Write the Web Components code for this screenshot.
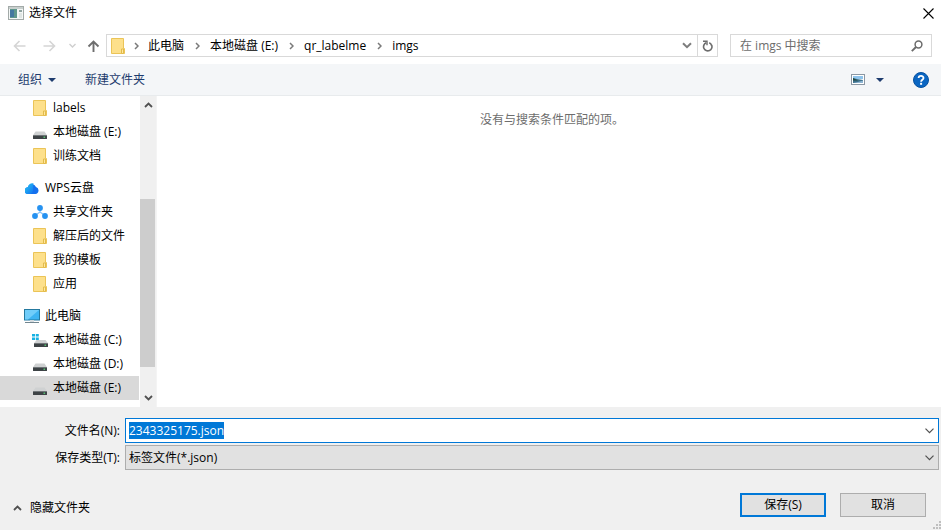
<!DOCTYPE html>
<html lang="zh-CN">
<head>
<meta charset="UTF-8">
<meta name="viewport" content="width=device-width, initial-scale=1">
<title>选择文件</title>
<style>
    body {
        margin: 0;
        font: 12px/16px "Open Sans", "Noto Sans CJK SC", sans-serif;
        color: #000;
        background: #fff;
    }
</style>
</head>
<body>
<file-dialog>
    <title-bar slot="title">选择文件</title-bar>
    <nav-bar slot="nav" placeholder="在 imgs 中搜索">
        <path-crumb>此电脑</path-crumb>
        <path-crumb>本地磁盘 (E:)</path-crumb>
        <path-crumb>qr_labelme</path-crumb>
        <path-crumb>imgs</path-crumb>
    </nav-bar>
    <tool-bar slot="tools"></tool-bar>
    <folder-tree slot="tree">
        <tree-item icon="folder" level="2">labels</tree-item>
        <tree-item icon="drive" level="2">本地磁盘 (E:)</tree-item>
        <tree-item icon="folder" level="2">训练文档</tree-item>
        <tree-item icon="cloud">WPS云盘</tree-item>
        <tree-item icon="share" level="2">共享文件夹</tree-item>
        <tree-item icon="folder" level="2">解压后的文件</tree-item>
        <tree-item icon="folder" level="2">我的模板</tree-item>
        <tree-item icon="folder" level="2">应用</tree-item>
        <tree-item icon="computer">此电脑</tree-item>
        <tree-item icon="system" level="2">本地磁盘 (C:)</tree-item>
        <tree-item icon="drive" level="2">本地磁盘 (D:)</tree-item>
        <tree-item icon="drive" level="2" selected>本地磁盘 (E:)</tree-item>
    </folder-tree>
    <span slot="files">没有与搜索条件匹配的项。</span>
    <save-panel slot="footer" filename="2343325175.json" filetype="标签文件(*.json)"></save-panel>
</file-dialog>

<script>
// [width, height, content]
const icons = {
    app: [16, 14, `
        <rect x=".5" y=".5" width="15" height="13" fill="#f4f7f6" stroke="#a3aaa8"/>
        <rect x="1" y="1" width="14" height="2" fill="#c9d0ce"/>
        <rect x="2" y="3" width="7" height="9" fill="#5f978c"/>
        <rect x="2" y="4" width="4" height="7" fill="#4478a0"/>
        <rect x="11" y="4" width="3" height="2" fill="#8fa3a0"/>
        <rect x="11" y="7" width="3" height="5" fill="#dfe5e3"/>`],
    close: [11, 11, `<path d="M.5.5l10 10M10.5.5l-10 10" fill="none" stroke="#000" stroke-width="1.1"/>`],
    back: [13, 12, `<path d="M12.5 6H1.5M6.5 1L1.5 6l5 5" fill="none" stroke="#d5d5d5" stroke-width="1.6"/>`],
    forward: [13, 12, `<path d="M.5 6h11M6.5 1l5 5-5 5" fill="none" stroke="#d5d5d5" stroke-width="1.6"/>`],
    recent: [7, 5, `<path d="M.5 1l3 3 3-3" fill="none" stroke="#cfcfcf" stroke-width="1.4"/>`],
    up: [13, 12, `<path d="M6.5 12V1.5M1.5 6.5l5-5 5 5" fill="none" stroke="#6e6e6e" stroke-width="1.9"/>`],
    crumb: [5, 8, `<path d="M1 1l3 3-3 3" fill="none" stroke="#7a7a7a" stroke-width="1.5"/>`],
    drop: [10, 7, `<path d="M1 1.2l4 4 4-4" fill="none" stroke="#7d7d7d" stroke-width="2"/>`],
    refresh: [11, 12, `
        <path d="M4.2 2.8A4.2 4.2 0 1 0 9.6 5" fill="none" stroke="#6c6c6c" stroke-width="1.6"/>
        <path d="M9.6 5.4A4.2 4.2 0 0 0 7.2 2.8" fill="none" stroke="#6c6c6c" stroke-width="1.6"/>
        <path d="M1 1.3h4v4" fill="none" stroke="#6c6c6c" stroke-width="1.4"/>`],
    search: [12, 12, `
        <circle cx="7.5" cy="4.5" r="3.4" fill="none" stroke="#6c6c6c" stroke-width="1.5"/>
        <path d="M5 7L.8 11.2" fill="none" stroke="#6c6c6c" stroke-width="1.9"/>`],
    triangle: [8, 4, `<path d="M0 0h8L4 4z" fill="#1e3c6e"/>`],
    view: [14, 11, `
        <rect x=".5" y=".5" width="13" height="10" fill="#fff" stroke="#8b98a4"/>
        <rect x="2" y="2" width="10" height="3" fill="#8ec4ec"/>
        <path d="M2 4l4 1 6 1v3H2z" fill="#3d718b"/>
        <path d="M2 4l5 2.5H2z" fill="#24493e"/>
        <path d="M6 8.2l6-1.7V9H2z" fill="#8eb5d3"/>`],
    help: [16, 16, `
        <circle cx="8" cy="8" r="7.5" fill="#0b66c2" stroke="#07519f"/>
        <path d="M5.6 6.1C5.6 3.2 10.5 3.2 10.5 6c0 1.8-2.4 1.8-2.4 3.8" fill="none" stroke="#fff" stroke-width="1.8"/>
        <rect x="7.1" y="10.8" width="2" height="2" fill="#fff"/>`],
    folder: [14, 16, `
        <path d="M.5.5h12v10h1v5H.5z" fill="#ffe391" stroke="#ebc457"/>
        <path d="M1 1h11v9.5l-1.5 1V15H1z" fill="#fde08b"/>
        <path d="M10.5 15.5v-4.5h2v4.5z" fill="#ffe99f" stroke="#e3bb4c"/>`],
    drive: [14, 9, `
        <path d="M2.5.5h9L14 4.2H0z" fill="#cfd1d2"/>
        <rect y="4" width="14" height="4" rx=".6" fill="#3d4245"/>
        <rect y="4" width="14" height=".8" fill="#7c8184"/>
        <rect x="10.5" y="5.6" width="1.6" height="1.2" fill="#5ddb7d"/>`],
    system: [16, 14, `
        <path d="M0 0h3v2.6H0zM3.8 0h3v2.6h-3zM0 3.4h3V6H0zM3.8 3.4h3V6h-3z" fill="#16b1e3"/>
        <path d="M4.5 6h9L16 9.2H2z" fill="#cfd1d2"/>
        <rect x="2" y="9" width="14" height="4" rx=".6" fill="#3d4245"/>
        <rect x="2" y="9" width="14" height=".8" fill="#7c8184"/>
        <rect x="12.5" y="10.6" width="1.6" height="1.2" fill="#5ddb7d"/>`],
    cloud: [14, 11, `
        <defs><linearGradient id="g" x1="0" x2="1" y1="0" y2="1">
            <stop offset="0" stop-color="#26c8f2"/><stop offset="1" stop-color="#126ff0"/>
        </linearGradient></defs>
        <path d="M3.4 11A3.3 3.3 0 0 1 2.8 4.3 4.4 4.4 0 0 1 11 4a3.6 3.6 0 0 1-.6 7z" fill="#1470ee"/>
        <path d="M3.4 11A3.3 3.3 0 0 1 2.8 4.3 4.4 4.4 0 0 1 8.6.6C7.5 4 9.5 8 6 11z" fill="url(#g)"/>`],
    share: [16, 14, `
        <path d="M8 3.5v4M8 7l-5 3.5M8 7l5 3.5" fill="none" stroke="#8cc4f7" stroke-width="1.3"/>
        <circle cx="8" cy="3" r="2.9" fill="#2692f1"/>
        <circle cx="3" cy="11" r="2.9" fill="#2692f1"/>
        <circle cx="13" cy="11" r="2.9" fill="#2692f1"/>`],
    computer: [16, 15, `
        <rect x=".5" y=".5" width="15" height="10.5" fill="#3db4f2" stroke="#25799f"/>
        <path d="M1 1h14L4 10.5H1z" fill="#70cdfa"/>
        <rect x="6" y="11" width="4" height="2" fill="#d4dbdf"/>
        <path d="M1 13.5h14" stroke="#71858f" stroke-width="1"/>`],
    scrollUp: [9, 6, `<path d="M1 5l3.5-3.5L8 5" fill="none" stroke="#505050" stroke-width="1.8"/>`],
    scrollDown: [9, 6, `<path d="M1 1l3.5 3.5L8 1" fill="none" stroke="#505050" stroke-width="1.8"/>`],
    chevron: [9, 6, `<path d="M.5.7l4 4 4-4" fill="none" stroke="#505050" stroke-width="1.2"/>`],
    grip: [8, 8, `<path d="M6 0h2v2H6zM3 3h2v2H3zM6 3h2v2H6zM0 6h2v2H0zM3 6h2v2H3zM6 6h2v2H6z" fill="#bfbfbf"/>`]
};

// styles every component starts from
const base = `
    :host, * { box-sizing: border-box; }
    button, input, select { font: inherit; color: inherit; margin: 0; padding: 0; border: 0; background: none; border-radius: 0; outline: none; }
    button { display: flex; align-items: center; justify-content: center; }
`;

class UiIcon extends HTMLElement {
    constructor() {
        super();
        this.attachShadow({ mode: "open" });
    }

    connectedCallback() {
        const [w, h, content] = icons[this.getAttribute("name")];
        this.shadowRoot.innerHTML = `
            <style>
                :host { display: block; flex: none; }
                svg { display: block; }
            </style>
            <svg width="${w}" height="${h}" viewBox="0 0 ${w} ${h}" aria-hidden="true">${content}</svg>
        `;
    }
}

class FileDialog extends HTMLElement {
    constructor() {
        super();
        this.attachShadow({ mode: "open" });
        this.shadowRoot.innerHTML = `
            <style>
                ${base}
                :host { display: flex; flex-direction: column; min-height: 100vh; }
                .main { flex: 1; display: grid; grid-template-columns: 156px 1fr; }
                .files { padding: 16px 0 0 6px; border-left: 1px solid #f4f4f4; text-align: center; color: #6d6d6d; }
            </style>
            <slot name="title"></slot>
            <slot name="nav"></slot>
            <slot name="tools"></slot>
            <div class="main">
                <slot name="tree"></slot>
                <div class="files"><slot name="files"></slot></div>
            </div>
            <slot name="footer"></slot>
        `;
    }
}

class TitleBar extends HTMLElement {
    constructor() {
        super();
        this.attachShadow({ mode: "open" });
        this.shadowRoot.innerHTML = `
            <style>
                ${base}
                :host { display: flex; align-items: center; height: 26px; padding: 0 7px 0 8px; gap: 5px; }
                span { flex: 1; }
            </style>
            <ui-icon name="app"></ui-icon>
            <span><slot></slot></span>
            <button aria-label="关闭"><ui-icon name="close"></ui-icon></button>
        `;
    }
}

class PathCrumb extends HTMLElement {
    constructor() {
        super();
        this.attachShadow({ mode: "open" });
        this.shadowRoot.innerHTML = `
            <style>
                ${base}
                :host { display: flex; align-items: center; white-space: nowrap; }
                .sep { width: 26px; display: flex; justify-content: center; }
                :host(:first-of-type) .sep { width: 23px; }
                a { color: inherit; text-decoration: none; }
            </style>
            <span class="sep"><ui-icon name="crumb"></ui-icon></span>
            <a href="#"><slot></slot></a>
        `;
    }
}

class NavBar extends HTMLElement {
    constructor() {
        super();
        this.attachShadow({ mode: "open" });
    }

    connectedCallback() {
        const placeholder = this.getAttribute("placeholder");
        this.shadowRoot.innerHTML = `
            <style>
                ${base}
                :host { display: flex; align-items: center; padding: 8px 9px 7px 13px; }
                .history { display: flex; align-items: center; width: 93px; }
                .history button { height: 23px; }
                .history button:nth-child(2) { margin-left: 17px; }
                .history button:nth-child(3) { margin-left: 13px; }
                .history button:nth-child(4) { margin-left: 11px; }
                .address, .search { display: flex; align-items: center; height: 23px; border: 1px solid #d9d9d9; }
                .address { flex: 1; padding-left: 4px; }
                .path { flex: 1; display: flex; }
                .address > button { height: 21px; width: 20px; }
                .address > button:last-child { border-left: 1px solid #d9d9d9; }
                .search { width: 202px; margin-left: 12px; padding: 0 8px 0 9px; }
                input { flex: 1; min-width: 0; height: 21px; }
                input::placeholder { color: #6d6d6d; opacity: 1; }
            </style>
            <div class="history">
                <button aria-label="后退"><ui-icon name="back"></ui-icon></button>
                <button aria-label="前进"><ui-icon name="forward"></ui-icon></button>
                <button aria-label="最近浏览的位置"><ui-icon name="recent"></ui-icon></button>
                <button aria-label="上移"><ui-icon name="up"></ui-icon></button>
            </div>
            <div class="address">
                <ui-icon name="folder"></ui-icon>
                <div class="path"><slot></slot></div>
                <button aria-label="以前的位置"><ui-icon name="drop"></ui-icon></button>
                <button aria-label="刷新"><ui-icon name="refresh"></ui-icon></button>
            </div>
            <div class="search">
                <input type="text" placeholder="${placeholder}" aria-label="搜索">
                <button aria-label="搜索"><ui-icon name="search"></ui-icon></button>
            </div>
        `;
    }
}

class ToolBar extends HTMLElement {
    constructor() {
        super();
        this.attachShadow({ mode: "open" });
        this.shadowRoot.innerHTML = `
            <style>
                ${base}
                :host { display: flex; align-items: center; height: 32px; padding: 0 12px 0 18px; background: #f4f6f8; border-bottom: 1px solid #e8ebed; color: #1e3c6e; }
                .organize { gap: 6px; }
                .create { margin-left: 29px; margin-right: auto; }
                .more { margin: 0 29px 0 11px; }
            </style>
            <button class="organize">组织<ui-icon name="triangle"></ui-icon></button>
            <button class="create">新建文件夹</button>
            <button aria-label="更改视图"><ui-icon name="view"></ui-icon></button>
            <button class="more" aria-label="更多选项"><ui-icon name="triangle"></ui-icon></button>
            <button aria-label="获取帮助"><ui-icon name="help"></ui-icon></button>
        `;
    }
}

class FolderTree extends HTMLElement {
    constructor() {
        super();
        this.attachShadow({ mode: "open" });
        this.shadowRoot.innerHTML = `
            <style>
                ${base}
                :host { display: flex; }
                .items { flex: 1; padding-bottom: 7px; }
                .scroll { width: 16px; margin-left: 1px; background: #f0f0f0; display: flex; flex-direction: column; }
                .scroll button { height: 18px; }
                .track { flex: 1; display: grid; grid-template-rows: 85fr 168fr 22fr; }
                .thumb { grid-row: 2; background: #cdcdcd; margin-right: 1px; }
            </style>
            <div class="items"><slot></slot></div>
            <div class="scroll">
                <button aria-label="向上滚动"><ui-icon name="scrollUp"></ui-icon></button>
                <div class="track"><div class="thumb"></div></div>
                <button aria-label="向下滚动"><ui-icon name="scrollDown"></ui-icon></button>
            </div>
        `;
    }
}

class TreeItem extends HTMLElement {
    constructor() {
        super();
        this.attachShadow({ mode: "open" });
    }

    connectedCallback() {
        const icon = this.getAttribute("icon");
        this.shadowRoot.innerHTML = `
            <style>
                ${base}
                :host { display: flex; align-items: center; height: 24px; margin-top: 8px; padding-left: 24px; gap: 5px; white-space: nowrap; }
                :host([level="2"]) { margin-top: 0; padding-left: 32px; }
                :host([selected]) { background: #d9d9d9; }
                .icon { width: 16px; height: 16px; display: flex; align-items: center; justify-content: center; }
                .icon.drive, .icon.system { align-items: flex-end; }
            </style>
            <span class="icon ${icon}"><ui-icon name="${icon}"></ui-icon></span>
            <slot></slot>
        `;
    }
}

class SavePanel extends HTMLElement {
    constructor() {
        super();
        this.attachShadow({ mode: "open" });
    }

    connectedCallback() {
        const filename = this.getAttribute("filename");
        const filetype = this.getAttribute("filetype");
        this.shadowRoot.innerHTML = `
            <style>
                ${base}
                :host { display: block; position: relative; background: #f0f0f0; padding-top: 11px; }
                .fields { display: grid; grid-template-columns: 120px 1fr; gap: 2px 5px; align-items: center; padding-right: 2px; }
                label { text-align: right; }
                .box { display: grid; grid-template-columns: 1fr 17px; align-items: center; height: 25px; border: 1px solid #adadad; background: #e1e1e1; }
                .box.name { border-color: #0078d7; background: #fff; }
                .box > * { grid-row: 1; }
                input { padding-left: 3px; height: 23px; min-width: 0; }
                input::selection { background: #0078d7; color: #fff; }
                select { grid-column: 1 / 3; height: 23px; padding-left: 3px; appearance: none; }
                .box ui-icon { grid-column: 2; justify-self: center; pointer-events: none; }
                .actions { display: flex; align-items: center; gap: 14px; padding: 23px 15px 13px 13px; }
                .hide { gap: 8px; margin-right: auto; height: 24px; padding-top: 5px; }
                .push { width: 86px; height: 24px; border: 1px solid #adadad; background: #e1e1e1; }
                .push.default { border: 2px solid #0078d7; }
                .grip { position: absolute; right: 0; bottom: 1px; }
            </style>
            <div class="fields">
                <label for="name">文件名(N):</label>
                <div class="box name">
                    <input id="name" type="text" value="${filename}" spellcheck="false">
                    <ui-icon name="chevron"></ui-icon>
                </div>
                <label for="type">保存类型(T):</label>
                <div class="box">
                    <select id="type"><option>${filetype}</option></select>
                    <ui-icon name="chevron"></ui-icon>
                </div>
            </div>
            <div class="actions">
                <button class="hide"><ui-icon name="scrollUp"></ui-icon>隐藏文件夹</button>
                <button class="push default">保存(S)</button>
                <button class="push">取消</button>
            </div>
            <ui-icon class="grip" name="grip"></ui-icon>
        `;

        // The name is selected so that typing replaces it
        const input = this.shadowRoot.querySelector("#name");
        input.focus();
        input.select();
    }
}

customElements.define("ui-icon", UiIcon);
customElements.define("file-dialog", FileDialog);
customElements.define("title-bar", TitleBar);
customElements.define("path-crumb", PathCrumb);
customElements.define("nav-bar", NavBar);
customElements.define("tool-bar", ToolBar);
customElements.define("folder-tree", FolderTree);
customElements.define("tree-item", TreeItem);
customElements.define("save-panel", SavePanel);
</script>
</body>
</html>
